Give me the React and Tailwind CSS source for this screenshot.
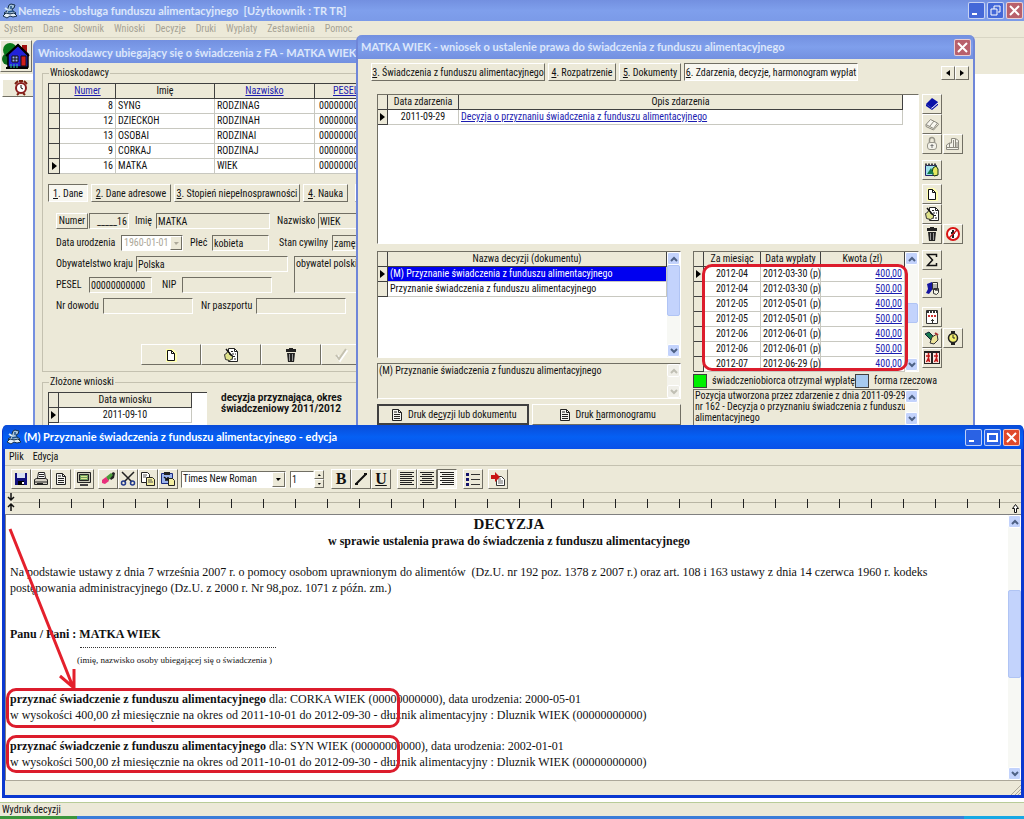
import React from 'react';

const applicants = [
  { no: 8, name: 'SYNG', surname: 'RODZINAG', pesel: '00000000000' },
  { no: 12, name: 'DZIECKOH', surname: 'RODZINAH', pesel: '00000000000' },
  { no: 13, name: 'OSOBAI', surname: 'RODZINAI', pesel: '00000000000' },
  { no: 9, name: 'CORKAJ', surname: 'RODZINAJ', pesel: '00000000000' },
  { no: 16, name: 'MATKA', surname: 'WIEK', pesel: '00000000000' },
];

const payments = [
  ['2012-04', '2012-03-30 (p)', '400,00'],
  ['2012-04', '2012-03-30 (p)', '500,00'],
  ['2012-05', '2012-05-01 (p)', '400,00'],
  ['2012-05', '2012-05-01 (p)', '500,00'],
  ['2012-06', '2012-06-01 (p)', '400,00'],
  ['2012-06', '2012-06-01 (p)', '500,00'],
  ['2012-07', '2012-06-29 (p)', '400,00'],
];

const mainMenu = ['System', 'Dane', 'Słownik', 'Wnioski', 'Decyzje', 'Druki', 'Wypłaty', 'Zestawienia', 'Pomoc'];

const RAISED = 'border border-t-white border-l-white border-r-[#716f64] border-b-[#716f64] bg-[#ece9d8]';
const SUNKEN = 'border border-t-[#716f64] border-l-[#716f64] border-r-white border-b-white';
const HEAD = 'h-[15px] border-r border-b border-[#404040] bg-[#ece9d8] p-0 font-normal leading-[14px]';
const CELL = 'h-[15px] border-r border-b border-[#c8c8c0] px-[2px] py-0 leading-[14px]';

/* ---------- icons ---------- */

const Svg = ({ children, size = 16 }) => (
  <svg width={size} height={size} viewBox="0 0 16 16" fill="none" aria-hidden="true">
    {children}
  </svg>
);

const AppIcon = () => (
  <Svg>
    <path d="M9 1l4 1-1 3-2 1 1 2 3 2-2 2-4-1-4 1-2-2 3-2 1-3 1-3z" fill="#a8c4dc" stroke="#16304c" />
    <path d="M1 13l3-3 4 1 4-1 3 3-4 1-3-1-3 2z" fill="#e4eef6" stroke="#16304c" />
    <path d="M9 3v3M6 9l5-1" stroke="#205088" strokeWidth="1.500" />
    <path d="M3 5l3 2" stroke="#d8ecfa" strokeWidth="2" />
  </Svg>
);

const NewIcon = () => (
  <Svg>
    <path d="M3 2h7l4 4v9H3z" fill="#ffffb0" />
    <path d="M4.500 3.500h4l3 3v7h-7z" fill="#fff" stroke="#111" />
    <path d="M8.500 3.500v3h3" stroke="#111" />
  </Svg>
);

const EditIcon = () => (
  <Svg>
    <path d="M5.500 1.500h6l3 3v10h-9z" fill="#fff" stroke="#222" />
    <path d="M11.500 1.500v3h3" stroke="#222" />
    <path d="M8 4.500h2M9 7h4M10 9.500h3M8 12h5" stroke="#222" strokeDasharray="2 1" />
    <path d="M1.500 7.500l2-1 1-2 2 1v2l3 1v3l-3 2-4-1z" fill="#dfe28a" stroke="#333" />
    <path d="M3 2l6 7" stroke="#111" strokeWidth="1.500" />
  </Svg>
);

const TrashIcon = () => (
  <Svg>
    <path d="M6 1h4v1h3v3H3V2h3z" fill="#222" />
    <path d="M4 6h8l-1 9H5z" fill="#222" />
    <path d="M6.500 7v7M9.500 7v7" stroke="#999" />
  </Svg>
);

const CheckIcon = () => (
  <Svg>
    <path d="M3 9l3 4 7-10" stroke="#fff" strokeWidth="3" />
    <path d="M2 8l3 4 7-10" stroke="#c4c1b0" strokeWidth="2" />
  </Svg>
);

const DocIcon = () => (
  <Svg>
    <path d="M3.500 2.500h6l3 3v8h-9z" fill="#f4f4f0" stroke="#222" />
    <path d="M9.500 2.500v3h3M5 5h3M5 7.500h6M5 9.500h6M5 11.500h6" stroke="#222" />
  </Svg>
);

const BookIcon = () => (
  <Svg>
    <path d="M8 2l6 4-6 6-6-4z" fill="#0a12a8" />
    <path d="M2 8l6 4 6-6v3l-6 5-6-4z" fill="#0a12a8" />
    <path d="M7.500 12.500L14 7" stroke="#fff" />
  </Svg>
);

const OpenBookIcon = () => (
  <Svg>
    <path d="M6.500 3.500l7 3.500-4 5.500-7.500-4z" fill="#f8f7f0" stroke="#8c8a80" />
    <path d="M2 8.500v2l7.500 3.500 5-5.500-1-1.500M10 5l-4 5" stroke="#8c8a80" />
  </Svg>
);

const LockIcon = () => (
  <Svg>
    <path d="M5.500 7V4a2.500 2.500 0 0 1 5 0v3" stroke="#98968a" strokeWidth="1.500" />
    <rect x="3.500" y="6.500" width="9" height="7" rx="2.500" fill="#f4f3ea" stroke="#98968a" />
    <path d="M8 8v4M6.500 9.500h3" stroke="#777" />
  </Svg>
);

const BuildingIcon = () => (
  <Svg>
    <path d="M1.500 13.500V9l3-2h2V2.500h4l3 2v9z" fill="#f4f3ea" stroke="#8c8a80" />
    <path d="M2 11.500h11M4.500 7v4M8.500 4v7M10.500 3v8M12 6v5" stroke="#8c8a80" />
  </Svg>
);

const MapIcon = () => (
  <Svg>
    <path d="M1.500 3.500h11v10h-11z" fill="#9ee0ea" stroke="#226" />
    <path d="M1 2.500h12" stroke="#444" strokeWidth="2" strokeDasharray="2 1" />
    <path d="M9 6l3-2 2 3v6l-4 1-2-3z" fill="#e4e860" stroke="#131" />
    <path d="M3 12l4-6 3 6z" fill="#157a4c" />
  </Svg>
);

const StopIcon = () => (
  <Svg>
    <circle cx="8" cy="8" r="6" fill="#fff" stroke="#d81414" strokeWidth="2" />
    <path d="M8 4v8M6 7h4" stroke="#222" strokeWidth="2" />
    <path d="M12 4l-8 8" stroke="#d81414" strokeWidth="1.500" />
  </Svg>
);

const SumIcon = () => (
  <Svg>
    <path d="M12.500 5V2.500h-9l5 5.500-5 5.500h9V11" stroke="#111" strokeWidth="1.500" />
  </Svg>
);

const PostIcon = () => (
  <Svg>
    <path d="M3 4l5-2v8l-3 4-3-1 2-4z" fill="#1414a0" />
    <path d="M8.500 2.500h5v7h-5zM9.500 8.500h5v4l-2 2-3-1z" fill="#f6f6e8" stroke="#333" />
    <path d="M9 5h4M9 7h4M11 10.500h3" stroke="#777" />
  </Svg>
);

const CalendarIcon = () => (
  <Svg>
    <path d="M2.500 1.500h11v13h-11z" fill="#fff" stroke="#333" />
    <path d="M3 3h10" stroke="#333" strokeWidth="2" strokeDasharray="2 1" />
    <path d="M4 7h8" stroke="#c33" strokeWidth="2" strokeDasharray="2 1" />
    <path d="M7 11.500h3M8.500 10v4" stroke="#333" />
  </Svg>
);

const PenIcon = () => (
  <Svg>
    <path d="M1 4l4-2 6 6-3 3z" fill="#167a50" stroke="#123" />
    <path d="M8 7l5-3 1 6-4 4-4-1z" fill="#eee49a" stroke="#333" />
    <path d="M11 3l3 2" stroke="#a33" strokeWidth="2" />
  </Svg>
);

const WatchIcon = () => (
  <Svg>
    <path d="M6 1h4v14H6z" fill="#222" />
    <circle cx="8" cy="8" r="4.500" fill="#f4f070" stroke="#222" strokeWidth="1.500" />
    <path d="M8 5v3h2" stroke="#222" />
  </Svg>
);

const FamilyIcon = () => (
  <Svg>
    <path d="M0 1h16v13H0z" fill="#222" />
    <path d="M1 3h6v10H1zM9 3h6v10H9z" fill="#fce8e0" />
    <path d="M4.500 3v5l-2 4M4.500 8l1 4M2 6h4M12.500 3v5l-2 4M12.500 8l1 4M10 6h4" stroke="#c01818" strokeWidth="1.500" />
  </Svg>
);

const HouseIcon = () => (
  <svg width="28" height="28" viewBox="0 0 28 28" aria-hidden="true">
    <circle cx="8" cy="8" r="7" fill="#0b7a1c" />
    <circle cx="6" cy="17" r="6" fill="#0b6a1c" />
    <path d="M20 3h5v8h-5z" fill="#a01010" />
    <path d="M6 12l10-9 10 9v13H6z" fill="#2222d8" stroke="#000" strokeWidth="1.500" />
    <path d="M4 14L16 3l11 11" fill="none" stroke="#000" strokeWidth="2" />
    <path d="M10 14h6v6h-6z" fill="#9ab0f0" stroke="#111" />
    <path d="M13 14v6M10 17h6" stroke="#111" />
    <path d="M19 14h5v10h-5z" fill="#d01c1c" stroke="#111" />
    <path d="M4 26h22" stroke="#000" strokeWidth="2" />
    <path d="M9 22v4M12 22v4M15 22v4" stroke="#3c9" />
  </svg>
);

const ClockIcon = () => (
  <Svg>
    <path d="M2 4l3-3M14 4l-3-3M4 15l2-2M12 15l-2-2M6 1h4" stroke="#7a2010" strokeWidth="2" />
    <circle cx="8" cy="8" r="5" fill="#fff" stroke="#8a1c1c" strokeWidth="2" />
    <path d="M8 5v3l2 1" stroke="#111" />
  </Svg>
);

const SaveIcon = () => (
  <Svg>
    <path d="M2 2h12v12H2z" fill="#10107c" />
    <path d="M4 2h8v5H4z" fill="#d8e0f4" />
    <path d="M5 10h6v4H5z" fill="#000" />
    <path d="M9 11h2v2H9z" fill="#fff" />
  </Svg>
);

const PrintIcon = () => (
  <Svg>
    <path d="M4.500 7.500l1-6h6l1 6" fill="#fff" stroke="#222" />
    <path d="M1.500 8.500l2-1h9l2 1v5h-13z" fill="#d4d0c4" stroke="#222" />
    <path d="M6 3.500h5M6 5.500h5M2 11h12M4 12.500h6" stroke="#222" />
  </Svg>
);

const MonitorIcon = () => (
  <Svg>
    <path d="M1.500 1.500h13v10h-13z" fill="#c8c8b8" stroke="#222" />
    <path d="M3.500 3.500h9v6h-9z" fill="#70a060" stroke="#222" />
    <path d="M5 5.500h6M5 7.500h6" stroke="#dde890" />
    <path d="M4 13h8v2H4z" fill="#444" />
  </Svg>
);

const EraserIcon = () => (
  <Svg>
    <path d="M9 6l4-5 2 1-1 5-3 2z" fill="#222" />
    <path d="M6 6l5-4 2 2-5 6z" fill="#4c9c3c" />
    <path d="M2 9l4-3 3 4-4 3-3-1z" fill="#e8307c" />
  </Svg>
);

const CutIcon = () => (
  <Svg>
    <path d="M2 1l10 10M14 1L4 11" stroke="#222" strokeWidth="1.500" />
    <circle cx="3.500" cy="12" r="2" stroke="#223a8c" strokeWidth="1.500" />
    <circle cx="12.500" cy="12" r="2" stroke="#223a8c" strokeWidth="1.500" />
  </Svg>
);

const CopyIcon = () => (
  <Svg>
    <path d="M1.500 1.500h6l2 2v8h-8z" fill="#fff" stroke="#222" />
    <path d="M6.500 6.500h6l2 2v6h-8z" fill="#f2eda0" stroke="#222" />
    <path d="M3 4h4M3 6h3M8 9h4M8 11h5" stroke="#555" />
  </Svg>
);

const PasteIcon = () => (
  <Svg>
    <path d="M1.500 2.500h11v10h-11z" fill="#9cb4ec" stroke="#1a2a80" />
    <path d="M4 1h6v3H4z" fill="#222" />
    <path d="M8.500 7.500h4l2 2v5h-6z" fill="#f2eda0" stroke="#222" />
    <path d="M4 6l4 3M8 6v3H5" stroke="#111" strokeWidth="1.500" />
  </Svg>
);

const LinesIcon = ({ d }) => (
  <Svg>
    <path d={d} stroke="#222" shapeRendering="crispEdges" />
  </Svg>
);

const BulletsIcon = () => (
  <Svg>
    <path d="M1 2h3v3H1zM1 7h3v3H1zM1 12h3v3H1z" fill="#14146c" />
    <path d="M6 3.500h9M6 8.500h9M6 13.500h9" stroke="#333" />
  </Svg>
);

const InsertIcon = () => (
  <Svg>
    <path d="M6.500 5.500h5l3 3v6h-8z" fill="#fff" stroke="#333" />
    <path d="M8 8h3M8 10h5M8 12h5" stroke="#666" />
    <path d="M1 4h4V1l5 5-5 5V8H1z" fill="#c81414" />
  </Svg>
);

const Chevron = ({ up, color = '#4d6185' }) => (
  <svg width="8" height="6" viewBox="0 0 8 6" fill="none" aria-hidden="true">
    <path d={up ? 'M1 5l3-3 3 3' : 'M1 1l3 3 3-3'} stroke={color} strokeWidth="2" />
  </svg>
);

/* ---------- shared controls ---------- */

const IconButton = ({ label, children, pressed, className = '' }) => (
  <button
    type="button"
    aria-label={label}
    className={`flex h-5 w-5 shrink-0 items-center justify-center ${pressed ? `${SUNKEN} bg-[#f8f7f0]` : RAISED} ${className}`}
  >
    {children}
  </button>
);

const Tab = ({ no, label, active, className }) => (
  <button
    type="button"
    className={`h-[18px] shrink-0 whitespace-nowrap leading-[15px] ${active ? `${SUNKEN} bg-[#f8f7f0]` : RAISED} ${className}`}
  >
    <span className="underline">{no}</span>. {label}
  </button>
);

const Marker = ({ active }) => (
  <td className="h-[15px] border-r border-b border-[#404040] bg-[#ece9d8] p-0">
    {active && (
      <svg className="mx-auto block" width="5" height="8" viewBox="0 0 5 8" aria-hidden="true">
        <path d="M0 0l5 4-5 4z" fill="#000" />
      </svg>
    )}
  </td>
);

const Scrollbar = ({ thumb, disabled }) => {
  const cap = disabled ? 'bg-[#f0efe8]' : 'bg-[#c3d3fc]';
  const color = disabled ? '#c0bfb4' : '#4d6185';
  return (
    <div className={`flex w-[13px] shrink-0 flex-col ${disabled ? 'bg-[#f4f3ec]' : 'bg-[#f7f8f4]'}`}>
      <button type="button" aria-label="W górę" className={`flex h-[13px] shrink-0 items-center justify-center rounded-xs border border-white ${cap}`}>
        <Chevron up color={color} />
      </button>
      <div className="flex-1">{thumb && <div className={`rounded-xs border border-[#b0c4f4] bg-[#c3d3fc] ${thumb}`} />}</div>
      <button type="button" aria-label="W dół" className={`flex h-[13px] shrink-0 items-center justify-center rounded-xs border border-white ${cap}`}>
        <Chevron color={color} />
      </button>
    </div>
  );
};

const Field = ({ id, label, value = '', labelClass = '', className = '' }) => (
  <>
    <label htmlFor={id} className={`shrink-0 whitespace-nowrap ${labelClass}`}>{label}</label>
    <input id={id} readOnly defaultValue={value} className={`h-4 min-w-0 shrink-0 bg-[#ece9d8] px-px ${SUNKEN} ${className}`} />
  </>
);

const WindowButton = ({ label, close, inactive, children }) => {
  const tone = close
    ? inactive ? 'bg-[#b8606c]' : 'bg-[#e0492a]'
    : inactive ? 'bg-[#4468d8]' : 'bg-[#2a62e4]';
  return (
    <button type="button" aria-label={label} className={`flex h-[17px] w-[17px] items-center justify-center rounded-xs border border-white/70 ${tone}`}>
      <svg width="11" height="11" viewBox="0 0 11 11" fill="none" stroke="#fff" strokeWidth="2" aria-hidden="true">
        {children}
      </svg>
    </button>
  );
};

/* ---------- windows ---------- */

const ApplicantsWindow = () => (
  <section className="absolute top-10 right-[300px] bottom-8 left-[33px] flex flex-col rounded-t-md border-x-2 border-[#7590e0] bg-[#ece9d8]">
    <h2 className="h-[23px] shrink-0 overflow-hidden rounded-t-sm bg-gradient-to-b from-[#7390e0] via-[#7f9fec] to-[#7390e0] pl-[3px] font-['Lato',sans-serif] text-[11px] leading-[25px] font-bold whitespace-nowrap text-[#dce6fa]">
      Wnioskodawcy ubiegający się o świadczenia z FA - MATKA WIEK
    </h2>

    <fieldset className="mx-[7px] mt-1 h-[305px] shrink-0 border border-[#c4c1b0] pl-[5px]">
      <legend className="ml-px px-px leading-3">Wnioskodawcy</legend>
      <table className="mt-1 w-[500px] table-fixed border-separate border-spacing-0 border-t border-l border-[#404040] bg-white">
        <colgroup>
          <col className="w-[11px]" />
          <col className="w-[56px]" />
          <col className="w-[99px]" />
          <col className="w-[100px]" />
          <col />
        </colgroup>
        <thead>
          <tr>
            <th className={HEAD} aria-label="Wiersz" />
            <th className={HEAD}><a href="#numer" className="text-[#1c1cb0] underline">Numer</a></th>
            <th className={HEAD}>Imię</th>
            <th className={HEAD}><a href="#nazwisko" className="text-[#1c1cb0] underline">Nazwisko</a></th>
            <th className={`${HEAD} pl-[18px] text-left`}><a href="#pesel" className="text-[#1c1cb0] underline">PESEL</a></th>
          </tr>
        </thead>
        <tbody>
          {applicants.map((row) => (
            <tr key={row.no}>
              <Marker active={row.no === 16} />
              <td className={`${CELL} text-right`}>{row.no}</td>
              <td className={CELL}>{row.name}</td>
              <td className={CELL}>{row.surname}</td>
              <td className={`${CELL} pl-1`}>{row.pesel}</td>
            </tr>
          ))}
        </tbody>
      </table>

      <div className="mt-[10px] flex gap-[3px]">
        <Tab no="1" label="Dane" active className="w-10" />
        <Tab no="2" label="Dane adresowe" className="w-20" />
        <Tab no="3" label="Stopień niepełnosprawności" className="w-[126px]" />
        <Tab no="4" label="Nauka" className="w-[45px]" />
        <Tab no="5" label="Inne" className="ml-1 w-[45px]" />
      </div>

      <div className="mt-[11px] flex items-center pl-2">
        <button type="button" className={`h-4 w-8 leading-[14px] ${RAISED}`}>Numer</button>
        <input aria-label="Numer" readOnly defaultValue="_____16" className={`ml-px h-4 w-10 bg-[#ece9d8] px-px text-right ${SUNKEN}`} />
        <Field id="imie" label="Imię" value="MATKA" labelClass="ml-[6px] w-[21px]" className="w-[114px]" />
        <Field id="nazwisko" label="Nazwisko" value="WIEK" labelClass="ml-[7px] w-[41px]" className="w-[120px]" />
      </div>
      <div className="mt-[6px] flex items-center pl-2">
        <label htmlFor="urodzenie" className="w-[65px] whitespace-nowrap">Data urodzenia</label>
        <span className={`flex w-[62px] bg-white ${SUNKEN}`}>
          <select id="urodzenie" disabled className="h-[14px] w-12 appearance-none pl-[2px] text-[#aca899]">
            <option>1960-01-01</option>
          </select>
          <span className={`flex h-[14px] w-3 items-center justify-center ${RAISED}`}>
            <svg width="5" height="3" aria-hidden="true"><path d="M0 0h5L2 3z" fill="#aca899" /></svg>
          </span>
        </span>
        <Field id="plec" label="Płeć" value="kobieta" labelClass="ml-[7px] w-[22px]" className="w-[57px]" />
        <Field id="stan" label="Stan cywilny" value="zamężna" labelClass="ml-[10px] w-[53px]" className="w-[120px]" />
      </div>
      <div className="mt-[5px] flex items-start gap-[6px] pl-2">
        <div className="flex w-[232px] flex-col gap-[5px]">
          <div className="flex items-center">
            <Field id="kraj" label="Obywatelstwo kraju" value="Polska" labelClass="w-20" className="w-[152px]" />
          </div>
          <div className="flex items-center">
            <Field id="pesel" label="PESEL" value="00000000000" labelClass="w-[33px]" className="w-[63px]" />
            <Field id="nip" label="NIP" labelClass="ml-[10px] w-5" className="w-[90px]" />
          </div>
        </div>
        <textarea aria-label="Obywatelstwo" readOnly defaultValue="obywatel polski" className={`h-[37px] w-40 resize-none bg-[#ece9d8] px-px leading-[14px] ${SUNKEN}`} />
      </div>
      <div className="mt-[5px] flex items-center pl-2">
        <Field id="dowod" label="Nr dowodu" labelClass="w-[47px]" className="w-[90px]" />
        <Field id="paszport" label="Nr paszportu" labelClass="ml-2 w-[55px]" className="w-[90px]" />
      </div>

      <div className="mt-[30px] flex pl-[93px]">
        <button type="button" aria-label="Nowy" className={`flex h-[21px] w-[60px] items-center justify-center ${RAISED}`}><NewIcon /></button>
        <button type="button" aria-label="Edytuj" className={`flex h-[21px] w-[60px] items-center justify-center ${RAISED}`}><EditIcon /></button>
        <button type="button" aria-label="Usuń" className={`flex h-[21px] w-[60px] items-center justify-center ${RAISED}`}><TrashIcon /></button>
        <button type="button" aria-label="Zatwierdź" disabled className={`flex h-[21px] w-[60px] items-center pl-3 ${RAISED}`}><CheckIcon /></button>
      </div>
    </fieldset>

    <fieldset className="mx-[7px] mt-1 flex-1 border border-[#c4c1b0] pl-[5px]">
      <legend className="ml-px px-px leading-3">Złożone wnioski</legend>
      <div className="mt-1 flex gap-[14px]">
        <div className="h-20 w-[159px] border-t border-l border-[#404040] bg-white">
          <table className="w-[143px] table-fixed border-separate border-spacing-0">
            <colgroup>
              <col className="w-[10px]" />
              <col />
            </colgroup>
            <thead>
              <tr>
                <th className={HEAD} aria-label="Wiersz" />
                <th className={HEAD}>Data wniosku</th>
              </tr>
            </thead>
            <tbody>
              <tr>
                <Marker active />
                <td className={`${CELL} text-center`}>2011-09-10</td>
              </tr>
            </tbody>
          </table>
        </div>
        <p className="font-['Roboto',sans-serif] leading-[11px] font-bold">
          decyzja przyznająca, okres<br />
          świadczeniowy 2011/2012
        </p>
      </div>
    </fieldset>
  </section>
);

const ToolRail = () => (
  <div className="flex w-[42px] shrink-0 flex-col">
    <IconButton label="Książka"><BookIcon /></IconButton>
    <IconButton label="Podgląd"><OpenBookIcon /></IconButton>
    <div className="flex gap-px">
      <IconButton label="Zablokuj"><LockIcon /></IconButton>
      <IconButton label="Instytucja"><BuildingIcon /></IconButton>
    </div>
    <IconButton label="Mapa" className="mt-[6px]"><MapIcon /></IconButton>
    <IconButton label="Nowe zdarzenie" className="mt-1"><NewIcon /></IconButton>
    <IconButton label="Edytuj zdarzenie"><EditIcon /></IconButton>
    <div className="flex gap-px">
      <IconButton label="Usuń zdarzenie"><TrashIcon /></IconButton>
      <IconButton label="Wstrzymaj"><StopIcon /></IconButton>
    </div>
    <IconButton label="Suma" className="mt-[6px]"><SumIcon /></IconButton>
    <IconButton label="Przekaz" className="mt-2"><PostIcon /></IconButton>
    <IconButton label="Kalendarz" className="mt-[9px]"><CalendarIcon /></IconButton>
    <div className="mt-px flex gap-px">
      <IconButton label="Podpisz"><PenIcon /></IconButton>
      <IconButton label="Terminy"><WatchIcon /></IconButton>
    </div>
    <IconButton label="Rodzina"><FamilyIcon /></IconButton>
  </div>
);

const RequestWindow = () => (
  <section className="absolute top-[35px] right-[49px] bottom-8 left-[356px] flex flex-col rounded-t-md border-x-2 border-[#6f86d8] bg-[#ece9d8]">
    <header className="flex h-6 shrink-0 items-center justify-between rounded-t-sm bg-gradient-to-b from-[#7390e0] via-[#7f9fec] to-[#7390e0] pr-[2px] pl-[3px]">
      <h2 className="font-['Lato',sans-serif] text-[11px] leading-6 font-bold whitespace-nowrap text-[#dce6fa]">
        MATKA WIEK - wniosek o ustalenie prawa do świadczenia z funduszu alimentacyjnego
      </h2>
      <WindowButton label="Zamknij" close inactive><path d="M1 1l9 9M10 1l-9 9" /></WindowButton>
    </header>

    <div className="flex items-center gap-[3px] pt-1 pr-1 pl-[13px]">
      <Tab no="3" label="Świadczenia z funduszu alimentacyjnego" className="w-[174px]" />
      <Tab no="4" label="Rozpatrzenie" className="w-[68px]" />
      <Tab no="5" label="Dokumenty" className="w-[62px]" />
      <Tab no="6" label="Zdarzenia, decyzje, harmonogram wypłat" active className="w-[174px]" />
      <div className="ml-auto flex pt-[2px]">
        <button type="button" aria-label="Poprzednie karty" className={`flex h-[14px] w-[14px] items-center justify-center ${RAISED}`}>
          <svg width="4" height="6" aria-hidden="true"><path d="M4 0v6L0 3z" fill="#000" /></svg>
        </button>
        <button type="button" aria-label="Następne karty" className={`flex h-[14px] w-[14px] items-center justify-center ${RAISED}`}>
          <svg width="4" height="6" aria-hidden="true"><path d="M0 0v6l4-3z" fill="#000" /></svg>
        </button>
      </div>
    </div>

    <div className="flex gap-[3px] pt-[13px] pr-[9px] pl-[19px]">
      <div className="min-w-0 flex-1">
        <div className={`h-[150px] bg-white pr-[15px] ${SUNKEN}`}>
          <table className="w-full table-fixed border-separate border-spacing-0">
            <colgroup>
              <col className="w-[10px]" />
              <col className="w-[71px]" />
              <col />
            </colgroup>
            <thead>
              <tr>
                <th className={HEAD} aria-label="Wiersz" />
                <th className={HEAD}>Data zdarzenia</th>
                <th className={HEAD}>Opis zdarzenia</th>
              </tr>
            </thead>
            <tbody>
              <tr>
                <Marker active />
                <td className={`${CELL} text-center`}>2011-09-29</td>
                <td className={CELL}>
                  <a href="#decyzja" className="text-[#1c1cb0] underline">Decyzja o przyznaniu świadczenia z funduszu alimentacyjnego</a>
                </td>
              </tr>
            </tbody>
          </table>
        </div>

        <div className="mt-[7px] flex gap-3">
          <div className="min-w-0 flex-1">
            <div className={`flex h-[107px] bg-white ${SUNKEN}`}>
              <div className="min-w-0 flex-1">
                <table className="w-full table-fixed border-separate border-spacing-0">
                  <colgroup>
                    <col className="w-[10px]" />
                    <col />
                  </colgroup>
                  <thead>
                    <tr>
                      <th className={HEAD} aria-label="Wiersz" />
                      <th className={HEAD}>Nazwa decyzji (dokumentu)</th>
                    </tr>
                  </thead>
                  <tbody>
                    <tr>
                      <Marker active />
                      <td className={`${CELL} bg-[#0000f0] text-white`}>(M) Przyznanie świadczenia z funduszu alimentacyjnego</td>
                    </tr>
                    <tr>
                      <Marker />
                      <td className={CELL}>Przyznanie świadczenia z funduszu alimentacyjnego</td>
                    </tr>
                  </tbody>
                </table>
              </div>
              <Scrollbar thumb="h-[51px]" />
            </div>
            <div className={`mt-[5px] flex h-9 ${SUNKEN}`}>
              <textarea aria-label="Opis decyzji" readOnly defaultValue="(M) Przyznanie świadczenia z funduszu alimentacyjnego" className="min-w-0 flex-1 resize-none px-px leading-[14px]" />
              <Scrollbar disabled />
            </div>
            <div className="mt-[5px] flex gap-[3px]">
              <button type="button" className="flex h-[21px] flex-1 items-center justify-center gap-[3px] border-2 border-[#404040] bg-[#ece9d8] whitespace-nowrap">
                <DocIcon /><span>Druk de<u>c</u>yzji lub dokumentu</span>
              </button>
              <button type="button" className={`flex h-[21px] flex-1 items-center justify-center gap-[3px] whitespace-nowrap ${RAISED}`}>
                <DocIcon /><span>Druk <u>h</u>armonogramu</span>
              </button>
            </div>
          </div>

          <div className="w-[226px] shrink-0">
            <div className={`relative flex h-[121px] bg-white ${SUNKEN}`}>
              <div className="min-w-0 flex-1">
                <table className="w-[211px] table-fixed border-separate border-spacing-0">
                  <colgroup>
                    <col className="w-[10px]" />
                    <col className="w-[57px]" />
                    <col className="w-[60px]" />
                    <col />
                  </colgroup>
                  <thead>
                    <tr>
                      <th className={HEAD} aria-label="Wiersz" />
                      <th className={HEAD}>Za miesiąc</th>
                      <th className={HEAD}>Data wypłaty</th>
                      <th className={HEAD}>Kwota (zł)</th>
                    </tr>
                  </thead>
                  <tbody>
                    {payments.map(([month, date, amount], i) => (
                      <tr key={i}>
                        <Marker active={i === 0} />
                        <td className={`${CELL} text-center`}>{month}</td>
                        <td className={`${CELL} whitespace-nowrap`}>{date}</td>
                        <td className={`${CELL} text-right`}><a href="#kwota" className="text-[#1c1cb0] underline">{amount}</a></td>
                      </tr>
                    ))}
                  </tbody>
                </table>
              </div>
              <Scrollbar thumb="mt-[38px] h-5" />
              {/* highlighted payments */}
              <div className="pointer-events-none absolute top-3 right-[10px] bottom-0 left-2 rounded-[10px] border-3 border-[#dc1c2c]" />
            </div>
            <div className="mt-px flex h-[15px] items-center whitespace-nowrap">
              <span className="h-[14px] w-[14px] shrink-0 border border-[#404040] bg-[#00f000]" />
              <span className="ml-[5px] w-[143px] shrink-0">świadczeniobiorca otrzymał wypłatę</span>
              <span className="h-[14px] w-[14px] shrink-0 border border-[#404040] bg-[#a6caf0]" />
              <span className="ml-[5px]">forma rzeczowa</span>
            </div>
            <div className={`mt-px flex h-[37px] ${SUNKEN}`}>
              <textarea
                aria-label="Opis pozycji"
                readOnly
                defaultValue={'Pozycja utworzona przez zdarzenie z dnia 2011-09-29\nnr 162 - Decyzja o przyznaniu świadczenia z funduszu\nalimentacyjnego'}
                className="min-w-0 flex-1 resize-none overflow-hidden px-px leading-[11px] whitespace-pre"
              />
              <Scrollbar />
            </div>
          </div>
        </div>
      </div>
      <ToolRail />
    </div>
  </section>
);

const EditorToolbar = () => (
  <div className="flex h-[27px] items-center border-b border-[#c4c1b0] pl-[6px]">
    <IconButton label="Zapisz"><SaveIcon /></IconButton>
    <IconButton label="Drukuj"><PrintIcon /></IconButton>
    <IconButton label="Podgląd"><DocIcon /></IconButton>
    <IconButton label="Ekran" className="ml-[3px]"><MonitorIcon /></IconButton>
    <IconButton label="Wyczyść" className="ml-1"><EraserIcon /></IconButton>
    <IconButton label="Wytnij"><CutIcon /></IconButton>
    <IconButton label="Kopiuj"><CopyIcon /></IconButton>
    <IconButton label="Wklej"><PasteIcon /></IconButton>
    <span className={`ml-[3px] flex w-[105px] bg-white ${SUNKEN}`}>
      <select aria-label="Czcionka" className="h-[15px] min-w-0 flex-1 appearance-none pl-px">
        <option>Times New Roman</option>
      </select>
      <span className={`flex h-[15px] w-[13px] items-center justify-center ${RAISED}`}>
        <svg width="5" height="3" aria-hidden="true"><path d="M0 0h5L2 3z" fill="#000" /></svg>
      </span>
    </span>
    <input aria-label="Rozmiar" defaultValue="1" className={`ml-1 h-[17px] w-6 bg-white px-px ${SUNKEN}`} />
    <span className="flex w-[10px] flex-col">
      <button type="button" aria-label="Większy" className={`flex h-[9px] items-center justify-center ${RAISED}`}>
        <svg width="3" height="2" aria-hidden="true"><path d="M0 2h3L1 0z" fill="#000" /></svg>
      </button>
      <button type="button" aria-label="Mniejszy" className={`flex h-[9px] items-center justify-center ${RAISED}`}>
        <svg width="3" height="2" aria-hidden="true"><path d="M0 0h3L1 2z" fill="#000" /></svg>
      </button>
    </span>
    <div className="ml-[7px] flex font-['Liberation_Serif',serif] text-base leading-4 font-bold">
      <IconButton label="Pogrubienie">B</IconButton>
      <IconButton label="Kursywa">
        <Svg><path d="M3 13L13 3M2 13h3M11 3h3" stroke="#111" strokeWidth="2" /></Svg>
      </IconButton>
      <IconButton label="Podkreślenie"><span className="underline">U</span></IconButton>
    </div>
    <IconButton label="Do lewej" className="ml-[6px]">
      <LinesIcon d="M1 1.500h14M1 3.500h12M1 5.500h14M1 7.500h12M1 9.500h14M1 11.500h12M1 13.500h14" />
    </IconButton>
    <IconButton label="Do środka">
      <LinesIcon d="M1 1.500h14M3 3.500h10M1 5.500h14M3 7.500h10M1 9.500h14M3 11.500h10M1 13.500h14" />
    </IconButton>
    <IconButton label="Do prawej" pressed>
      <LinesIcon d="M1 1.500h14M3 3.500h12M1 5.500h14M3 7.500h12M1 9.500h14M3 11.500h12M1 13.500h14" />
    </IconButton>
    <IconButton label="Lista" className="ml-[6px]"><BulletsIcon /></IconButton>
    <IconButton label="Wstaw" className="ml-[5px]"><InsertIcon /></IconButton>
  </div>
);

const Ruler = () => (
  <div className="relative h-[22px] overflow-hidden border-b border-[#808080]">
    <svg className="block h-[21px] w-full" shapeRendering="crispEdges" aria-hidden="true">
      <path d="M8 9.500h2000" stroke="#b8b5a4" />
      {Array.from({ length: 31 }, (_, i) => (
        <path key={i} d={`M${34.5 + i * 32} 6v9`} stroke="#222" />
      ))}
    </svg>
    <svg className="absolute top-0 left-[2px]" width="8" height="18" viewBox="0 0 8 18" fill="none" stroke="#111" strokeWidth="1.500" aria-hidden="true">
      <path d="M4 0v7M1 4l3 3 3-3M4 18v-7M1 14l3-3 3 3" />
    </svg>
    <svg className="absolute right-[2px] bottom-px" width="7" height="9" viewBox="0 0 7 9" fill="#fff" stroke="#111" aria-hidden="true">
      <path d="M2.500 8.500v-4h-2l3-4 3 4h-2v4z" />
    </svg>
  </div>
);

const Award = ({ who, birth, amount }) => (
  <p className="mb-[15px]">
    <strong>przyznać świadczenie z funduszu alimentacyjnego</strong> dla: {who} (00000000000), data urodzenia: {birth}
    <br />
    w wysokości {amount} zł miesięcznie na okres od 2011-10-01 do 2012-09-30 - dłużnik alimentacyjny : Dluznik WIEK (00000000000)
  </p>
);

const EditorWindow = () => (
  <section className="absolute top-[425px] right-0 bottom-[21px] left-[2px] flex flex-col rounded-t-md border-x-3 border-b-3 border-[#0a38d0] bg-[#ece9d8]">
    <header className="-mx-[2px] flex h-6 shrink-0 items-center rounded-t-sm bg-gradient-to-b from-[#0a4cd8] via-[#0560f4] to-[#0a50e8] pr-[3px] pl-[3px]">
      <AppIcon />
      <h2 className="ml-[2px] flex-1 font-['Lato',sans-serif] text-[11px] font-bold text-white">
        (M) Przyznanie świadczenia z funduszu alimentacyjnego - edycja
      </h2>
      <div className="flex gap-[2px]">
        <WindowButton label="Minimalizuj"><path d="M1 9h5" /></WindowButton>
        <WindowButton label="Maksymalizuj"><path d="M1 2h9v7H1z" /></WindowButton>
        <WindowButton label="Zamknij" close><path d="M1 1l9 9M10 1l-9 9" /></WindowButton>
      </div>
    </header>

    <nav className="flex h-[17px] shrink-0 items-center gap-[9px] border-b border-[#c4c1b0] pl-1">
      <button type="button">Plik</button>
      <button type="button">Edycja</button>
    </nav>
    <EditorToolbar />
    <Ruler />

    <div className="flex min-h-0 flex-1 bg-white">
      <article className="relative min-w-0 flex-1 overflow-hidden border-l border-[#808080] pl-1 font-['Liberation_Serif',serif] text-xs leading-4 whitespace-nowrap text-[#111]">
        <h1 className="pt-px text-center text-[15px] leading-4 font-bold">DECYZJA</h1>
        <h3 className="mt-px text-center font-bold">w sprawie ustalenia prawa do świadczenia z funduszu alimentacyjnego</h3>
        <p className="mt-[15px]">
          Na podstawie ustawy z dnia 7 września 2007 r. o pomocy osobom uprawnionym do alimentów&nbsp; (Dz.U. nr 192 poz. 1378 z 2007 r.) oraz art. 108 i 163 ustawy z dnia 14 czerwca 1960 r. kodeks<br />
          postępowania administracyjnego (Dz.U. z 2000 r. Nr 98,poz. 1071 z późn. zm.)
        </p>
        <p className="mt-[30px] font-bold">Panu / Pani : MATKA WIEK</p>
        <div className="mt-[5px] ml-[70px] w-[196px] border-b border-dotted border-[#333]" />
        <p className="mt-1 pl-[67px] text-[9px]">(imię, nazwisko osoby ubiegającej się o świadczenia )</p>
        <div className="mt-[23px]">
          <Award who="CORKA WIEK" birth="2000-05-01" amount="400,00" />
          <Award who="SYN WIEK" birth="2002-01-01" amount="500,00" />
        </div>

        {/* red annotations drawn over the document */}
        <svg className="pointer-events-none absolute top-0 left-0" width="80" height="180" fill="none" stroke="#e4202c" strokeWidth="3" aria-hidden="true">
          <path d="M4 14l63 158M54 161l14 12V154" />
        </svg>
        <div className="pointer-events-none absolute top-[173px] left-0 h-10 w-[394px] rounded-[10px] border-3 border-[#dc1c2c]" />
        <div className="pointer-events-none absolute top-[220px] left-0 h-[38px] w-[394px] rounded-[10px] border-3 border-[#dc1c2c]" />
      </article>
      <Scrollbar thumb="mt-[62px] h-[88px]" />
    </div>
    <footer className="flex h-[15px] shrink-0 items-end justify-end border-t border-[#aca899]">
      <svg width="12" height="12" stroke="#aca899" strokeWidth="1" aria-hidden="true">
        <path d="M2 12L12 2M6 12l6-6M9 12l3-3" />
      </svg>
    </footer>
  </section>
);

const App = () => (
  <div className="relative flex min-h-screen flex-col overflow-hidden bg-white font-['Roboto_Condensed','Liberation_Sans_Narrow',sans-serif] text-[10px] leading-[14px] text-[#111]">
    <header className="flex h-[21px] items-center bg-gradient-to-b from-[#7390e0] via-[#7f9fec] to-[#7b9ae8] pr-px pl-[2px]">
      <AppIcon />
      <h1 className="flex-1 font-['Lato',sans-serif] text-[11px] font-bold whitespace-pre text-[#dce6fa]">{'Nemezis - obsługa funduszu alimentacyjnego  [Użytkownik : TR TR]'}</h1>
      <div className="flex gap-[2px]">
        <WindowButton label="Minimalizuj" inactive><path d="M1 9h5" /></WindowButton>
        <WindowButton label="Przywróć" inactive><path d="M4 4V1h6v6H8M1 4h6v6H1z" strokeWidth="1" /></WindowButton>
        <WindowButton label="Zamknij" close inactive><path d="M1 1l9 9M10 1l-9 9" /></WindowButton>
      </div>
    </header>
    <nav className="flex h-[17px] items-center gap-[10px] border-b border-[#d8d5c4] bg-[#ece9d8] pl-1 text-[#a5a294]">
      {mainMenu.map((item) => (
        <button key={item} type="button">{item}</button>
      ))}
    </nav>
    <div className="h-9 bg-[#ece9d8]">
      <button type="button" aria-label="Strona główna" className={`mt-[2px] flex h-8 w-8 items-center justify-center ${RAISED}`}><HouseIcon /></button>
    </div>
    <main className="flex-1 pt-[5px]">
      <button type="button" aria-label="Przypomnienia" className={`ml-[2px] flex h-[18px] w-8 items-center justify-end pr-1 ${RAISED}`}><ClockIcon /></button>
    </main>
    <ApplicantsWindow />
    <RequestWindow />
    <EditorWindow />
    <footer>
      <p className="h-[14px] border-t border-[#b8cc98] bg-[#ece9d8] pl-[2px]">Wydruk decyzji</p>
      <div className="flex h-[3px] bg-[#3c7cd8]">
        <span className="w-[77px] bg-[#3c963c]" />
        <span className="ml-auto w-[60px] bg-[#18a8e4]" />
      </div>
    </footer>
  </div>
);

export default App;
